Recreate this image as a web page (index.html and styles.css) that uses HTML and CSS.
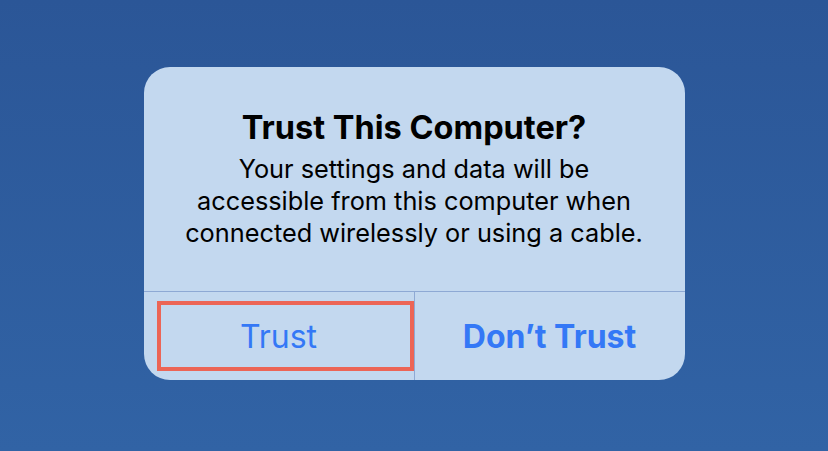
FILE: index.html
```html
<!DOCTYPE html>
<html lang="en">
<head>
    <meta charset="UTF-8">
    <title>Trust This Computer?</title>
    <link rel="stylesheet" href="styles.css">
</head>
<body>
    <div class="screen">
        <div class="alert">
            <div class="alert-body">
                <h1 class="alert-title">Trust This Computer?</h1>
                <p class="alert-text">Your settings and data will be<br>accessible from this computer when<br>connected wirelessly or using a cable.</p>
            </div>
            <div class="alert-actions">
                <button class="action highlighted">Trust</button>
                <button class="action bold">Don’t Trust</button>
            </div>
        </div>
    </div>
</body>
</html>
```

FILE: styles.css
```css
body {
    margin: 0;
    font-family: Inter, "Noto Sans", sans-serif;
}
.screen {
    width: 828px;
    height: 451px;
    background: linear-gradient(180deg, #2b5697 0%, #3163a5 100%);
    display: flex;
    justify-content: center;
    padding-top: 67px;
    box-sizing: border-box;
}
.alert {
    width: 541px;
    height: 313px;
    background-color: #c3d8ef;
    border-radius: 26px;
    display: flex;
    flex-direction: column;
    overflow: hidden;
}
.alert-body {
    height: 225px;
    box-sizing: border-box;
    padding-top: 41px;
    text-align: center;
    border-bottom: 1px solid #8ea9d4;
}
.alert-title {
    margin: 0;
    font-size: 32.5px;
    font-weight: 700;
    line-height: 40px;
    color: #000;
}
.alert-text {
    margin: 5px 0 0;
    white-space: nowrap;
    font-size: 25.3px;
    line-height: 32px;
    color: #000;
}
.alert-actions {
    flex: 1;
    display: grid;
    grid-template-columns: 270px 1fr;
}
.action {
    border: none;
    background: none;
    font-family: inherit;
    font-size: 32px;
    color: #3478f6;
    padding: 0;
}
.action + .action {
    border-left: 1px solid #8ea9d4;
}
.bold {
    font-weight: 700;
}
.highlighted {
    position: relative;
}
.highlighted::after {
    content: "";
    position: absolute;
    top: 9px;
    bottom: 9px;
    left: 13px;
    right: 0;
    border: 4px solid #ec6556;
}
```
